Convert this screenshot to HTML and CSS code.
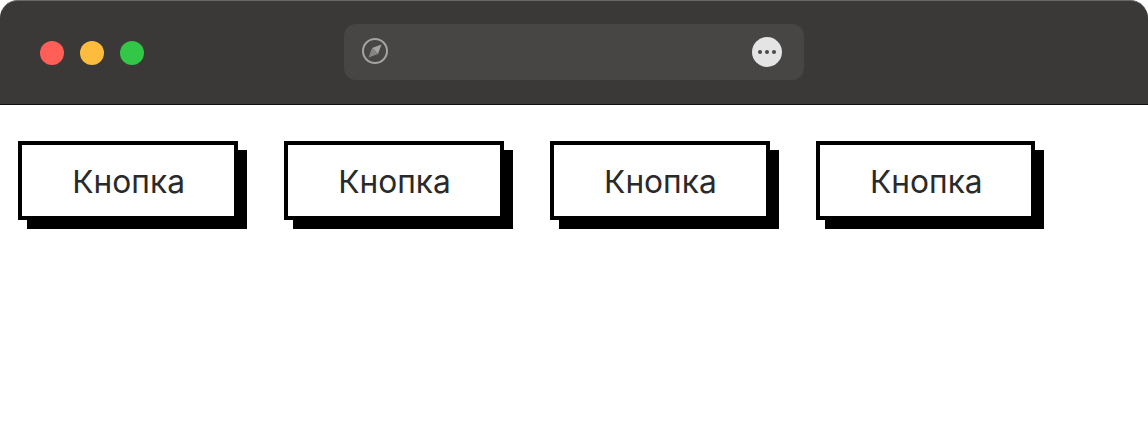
FILE: index.html
```html
<!DOCTYPE html>
<html lang="en">
  <head>
    <meta charset="UTF-8" />
    <meta name="viewport" content="width=device-width, initial-scale=1.0" />
    <title>Кнопка</title>
    <link rel="stylesheet" href="styles.css">
  </head>
  <body>
    <header class="titlebar">
      <div class="lights">
        <span class="light light-red"></span>
        <span class="light light-yellow"></span>
        <span class="light light-green"></span>
      </div>
      <div class="address">
        <svg class="compass" width="28" height="28" viewBox="0 0 28 28">
          <circle cx="14" cy="14" r="12" fill="none" stroke="#a3a3a1" stroke-width="2" />
          <path d="M20.5 7.5 L17 17 L11 11 Z" fill="#a3a3a1" />
          <path d="M7.5 20.5 L11 11 L17 17 Z" fill="#858583" />
        </svg>
        <div class="more">
          <span class="dot"></span>
          <span class="dot"></span>
          <span class="dot"></span>
        </div>
      </div>
    </header>
    <main class="buttons">
      <button class="button" type="button">Кнопка</button>
      <button class="button" type="button">Кнопка</button>
      <button class="button" type="button">Кнопка</button>
      <button class="button" type="button">Кнопка</button>
    </main>
  </body>
</html>
```

FILE: styles.css
```css
* {
  margin: 0;
  padding: 0;
  box-sizing: border-box;
}

body {
  background-color: #fff;
  font-family: Inter, "Noto Sans", sans-serif;
  overflow: hidden;
}

.titlebar {
  height: 105px;
  position: relative;
  padding-left: 40px;
  background-color: #3a3937;
  border-top: 1px solid #6a6967;
  border-bottom: 1px solid #111;
  border-radius: 18px 18px 0 0;
  display: flex;
  align-items: center;
}

.lights {
  display: flex;
  gap: 16px;
}

.light {
  width: 24px;
  height: 24px;
  border-radius: 50%;
}

.light-red {
  background-color: #ff5f57;
}

.light-yellow {
  background-color: #febc3e;
}

.light-green {
  background-color: #33c748;
}

.address {
  position: absolute;
  top: 23px;
  left: 344px;
  width: 460px;
  height: 56px;
  padding: 0 22px 0 17px;
  background-color: #474644;
  border-radius: 12px;
  display: flex;
  align-items: center;
  justify-content: space-between;
}

.compass {
  margin-bottom: 2px;
}

.more {
  width: 30px;
  height: 30px;
  border-radius: 50%;
  background-color: #e4e4e4;
  display: flex;
  align-items: center;
  justify-content: center;
  gap: 2.5px;
}

.dot {
  width: 4.5px;
  height: 4.5px;
  border-radius: 50%;
  background-color: #4a4947;
}

.buttons {
  display: flex;
  gap: 46.15px;
  padding: 36px 18px;
}

.button {
  width: 219.75px;
  height: 79px;
  padding: 2px 0 0 1.5px;
  border: 4px solid #000;
  background-color: #fff;
  box-shadow: 9px 9px 0 #000;
  color: #2a2a2a;
  font-family: inherit;
  font-size: 31.7px;
  font-weight: 400;
}
```
